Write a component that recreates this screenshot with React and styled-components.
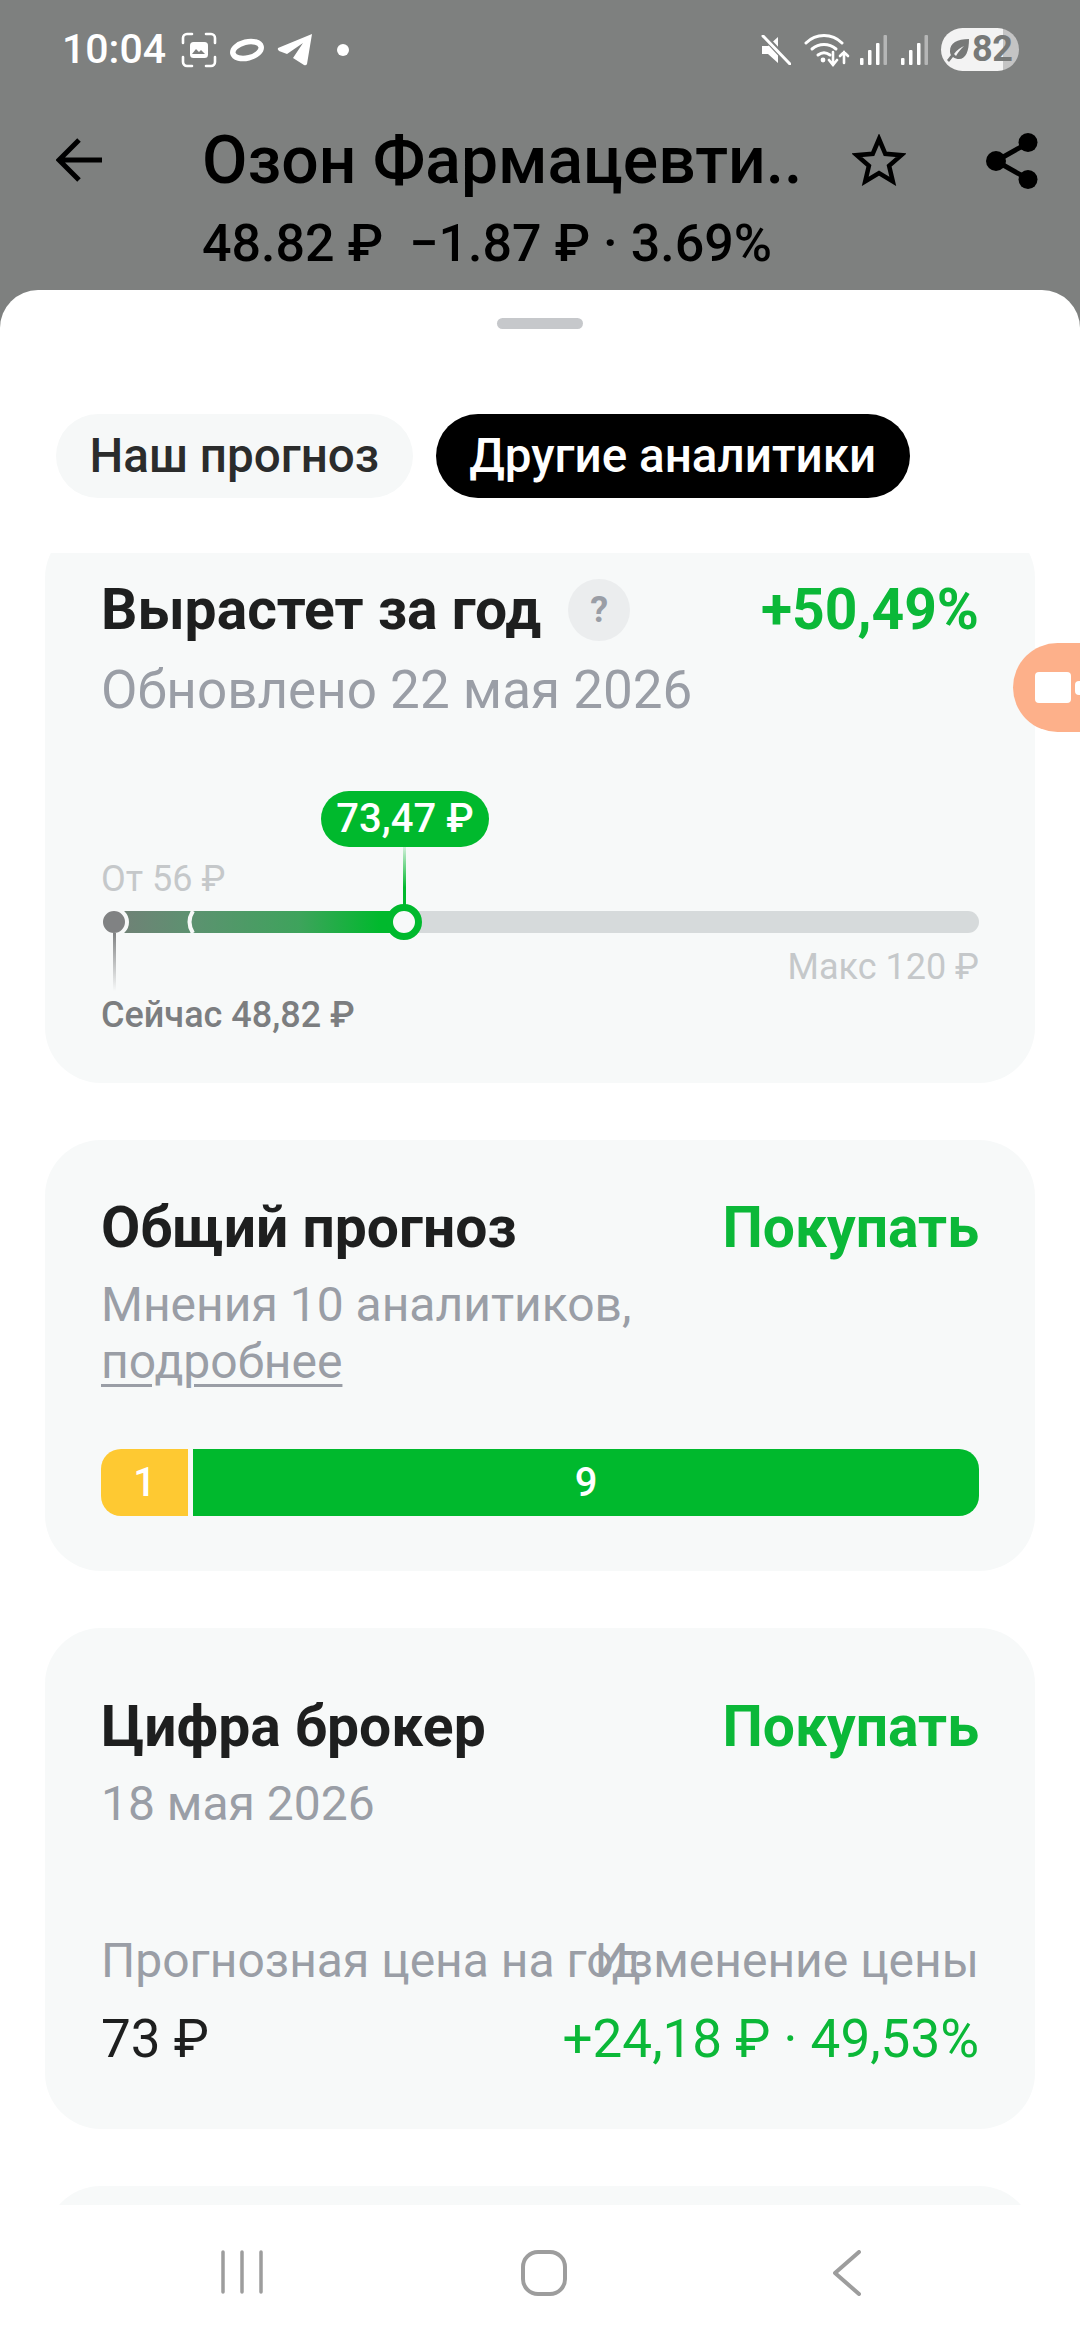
import React from "react";
import styled, { createGlobalStyle } from "styled-components";

const Global = createGlobalStyle`
  html, body { margin: 0; padding: 0; background: #fff; }
  body { font-family: Roboto, "Noto Sans", sans-serif; }
  * { box-sizing: border-box; }
`;

const Screen = styled.div`
  position: relative; width: 1080px; height: 2340px; overflow: hidden;
  display: flex; flex-direction: column; background: #7e807f;
`;
const StatusBar = styled.div`
  height: 98px; padding: 28px 61px 0 62px; display: flex; align-items: flex-start; justify-content: space-between; flex: none;
`;
const StatusGroup = styled.div`display: flex; align-items: center; height: 43px;`;
const Time = styled.span`color: #fff; font: 500 41px/43px Roboto, sans-serif; margin-right: 15px;`;
const Battery = styled.div`
  width: 78px; height: 43px; border-radius: 22px; margin-left: 13px; overflow: hidden; display: flex; align-items: center;
  background: linear-gradient(90deg, #f3f3f3 0 62px, #c4c4c4 62px 100%); padding-left: 4px;
`;
const BatteryText = styled.span`color: #777978; font: 700 36px/43px Roboto, sans-serif; margin-left: 1px; letter-spacing: -0.5px;`;

const Header = styled.div`
  height: 192px; flex: none; display: flex; padding: 28px 42px 0 56px; align-items: flex-start;
`;
const BackSlot = styled.div`width: 146px; flex: none; padding-top: 12px;`;
const HeaderText = styled.div`flex: 1; min-width: 0;`;
const Title = styled.div`font: 500 66px/70px Roboto, sans-serif; color: #000; white-space: nowrap;`;
const Sub = styled.div`font: 500 52px/60px Roboto, sans-serif; color: #000; white-space: pre; margin-top: 18px;`;
const HeaderIcons = styled.div`display: flex; gap: 80px; padding-top: 7px;`;

const Sheet = styled.div`
  flex: 1; min-height: 0; background: #fff; border-radius: 38px 38px 0 0; display: flex; flex-direction: column;
`;
const Handle = styled.div`width: 86px; height: 11px; border-radius: 6px; background: #c6c8cb; margin: 28px auto 0; flex: none;`;
const Tabs = styled.div`display: flex; gap: 23px; padding: 85px 56px 0; flex: none;`;
const Tab = styled.div`
  height: 84px; padding: 0 33.5px; border-radius: 42px; display: flex; align-items: center;
  font: 500 47.6px/84px Roboto, sans-serif;
  background: ${p => (p.$active ? "#000" : "#f6f8f8")};
  color: ${p => (p.$active ? "#fff" : "#2b2c2c")};
`;
const Viewport = styled.div`flex: 1; min-height: 0; overflow: hidden; margin-top: 55px; padding: 0 45px;`;
const Scroller = styled.div`display: flex; flex-direction: column; gap: 57px; margin-top: -31px;`;
const Card = styled.div`
  background: #f7f9f9; border-radius: 56px; padding: ${p => p.$top ?? 59}px 56px ${p => p.$bottom ?? 55}px;
  min-height: ${p => p.$min ?? 0}px;
`;
const CardHead = styled.div`display: flex; justify-content: space-between; align-items: center; height: 57px;`;
const CardTitleWrap = styled.div`display: flex; align-items: center; gap: 27px;`;
const CardTitle = styled.div`font: 700 57px/57px Roboto, sans-serif; color: #1e1f1f; white-space: nowrap;`;
const Verdict = styled.div`font: 700 57px/57px Roboto, sans-serif; color: #0bb838; white-space: nowrap;`;
const Help = styled.div`
  width: 62px; height: 62px; border-radius: 50%; background: #ebedee; color: #9a9ea6;
  font: 700 36px/62px Roboto, sans-serif; text-align: center;
`;
const Muted = styled.div`font: 400 ${p => p.$size ?? 48}px/57px Roboto, sans-serif; color: #9a9ea6; margin-top: ${p => p.$top ?? 20}px;`;
const MutedLink = styled.span`text-decoration: underline; text-underline-offset: 6px; text-decoration-thickness: 3px;`;

const Range = styled.div`position: relative; margin-top: 72px; padding-top: 67px;`;
const RangeLabel = styled.div`
  font: 400 36px/42px Roboto, sans-serif; color: #c5c8ca;
`;
const MaxLabel = styled(RangeLabel)`text-align: right; margin-top: 13px;`;
const NowLabel = styled.div`font: 500 36px/42px Roboto, sans-serif; color: #7c7e80; margin-top: 6px;`;
const Track = styled.div`position: relative; height: 22px; border-radius: 11px; background: #d6dadb; margin-top: 11px; margin-left: 2px;`;
const Fill = styled.div`
  height: 100%; border-radius: 11px 0 0 11px; width: ${p => p.$w}px;
  background: linear-gradient(90deg, #757d78 0%, #5c9270 30%, #3ea35c 65%, #00b92d 92%);
`;
const NowDot = styled.div`
  position: absolute; left: -4px; top: -4px; width: 30px; height: 30px; border-radius: 50%;
  background: #808283; border: 4px solid #f7f9f9;
`;
const NowStem = styled.div`
  position: absolute; left: 10px; top: 22px; width: 3px; height: 58px;
  background: linear-gradient(180deg, #808283, rgba(128,130,131,0));
`;
const FromCut = styled.svg`position: absolute; left: 80px; top: 0; display: block;`;
const Knob = styled.div`
  position: absolute; left: 283px; top: -7px; width: 36px; height: 36px; border-radius: 50%;
  background: #f7f9f9; border: 7px solid #00b92d;
`;
const KnobStem = styled.div`
  position: absolute; left: 302px; top: 56px; width: 3px; height: 58px;
  background: linear-gradient(180deg, rgba(0,185,45,0.15), #00b92d 70%);
`;
const Bubble = styled.div`
  position: absolute; left: 220px; top: 0; width: 168px; height: 56px; border-radius: 28px; background: #00b92d;
  color: #fff; font: 500 40px/56px Roboto, sans-serif; text-align: center;
`;

const VoteBar = styled.div`display: flex; gap: 5px; height: 67px; margin-top: 59px;`;
const Vote = styled.div`
  flex: ${p => (p.$grow ? 1 : "none")}; width: ${p => (p.$grow ? "auto" : "87px")};
  background: ${p => p.$c}; border-radius: ${p => p.$r};
  color: #fff; font: 500 40px/67px Roboto, sans-serif; text-align: center;
`;

const Split = styled.div`display: grid; grid-template-columns: minmax(0, 1fr) minmax(0, 1fr); margin-top: ${p => p.$top}px;`;
const Cell = styled.div`display: flex; white-space: nowrap; justify-content: ${p => (p.$right ? "flex-end" : "flex-start")};`;
const MetricLabel = styled.div`font: 400 48px/57px Roboto, sans-serif; color: #9a9ea6; flex: none;`;
const MetricValue = styled.div`font: 400 53px/60px Roboto, sans-serif; color: ${p => p.$c}; flex: none;`;

const Nav = styled.div`
  height: 135px; flex: none; background: #fff; display: flex; padding-top: 45px; align-items: flex-start;
`;

const W = "#fff";

const ScreenshotIcon = () => (
  <svg width="36" height="36" viewBox="0 0 36 36" style={{ marginRight: 12 }}>
    <path d="M2 11V6a4 4 0 0 1 4-4h5M25 2h5a4 4 0 0 1 4 4v5M34 25v5a4 4 0 0 1-4 4h-5M11 34H6a4 4 0 0 1-4-4v-5" fill="none" stroke={W} strokeWidth="2.6" strokeLinecap="round" />
    <rect x="9" y="10" width="18" height="16" rx="3.5" fill={W} />
    <path d="M11 22l4-5 3 3 2-2 4 4z" fill="#7e807f" />
  </svg>
);
const RingIcon = () => (
  <svg width="36" height="26" viewBox="0 0 36 26" style={{ marginRight: 12 }}>
    <ellipse cx="18" cy="13" rx="14.5" ry="8" transform="rotate(-14 18 13)" fill="none" stroke={W} strokeWidth="5.5" />
  </svg>
);
const PlaneIcon = () => (
  <svg width="36" height="32" viewBox="0 0 36 32" style={{ marginRight: 24 }}>
    <path d="M1 14 L35 0 L30 30 Q29 32 27 31 L16 24 L26 9 L10 20 L2 17 Q0 15 1 14z" fill={W} />
  </svg>
);
const Dot = styled.span`width: 12px; height: 12px; border-radius: 50%; background: #fff;`;
const MuteIcon = () => (
  <svg width="30" height="30" viewBox="0 0 30 30" style={{ marginRight: 13 }}>
    <path d="M1 11h6l10-9v26L7 19H1z" fill={W} />
    <path d="M3 1l26 28" stroke="#7e807f" strokeWidth="6" />
    <path d="M2 1l27 28" stroke={W} strokeWidth="3" strokeLinecap="round" />
  </svg>
);
const WifiIcon = () => (
  <svg width="46" height="34" viewBox="0 0 46 34" style={{ marginRight: 10 }}>
    <g fill="none" stroke={W} strokeWidth="3" strokeLinecap="round">
      <path d="M2 10C12 0 28 0 38 10" />
      <path d="M8 16c7-6 17-6 24 0" />
      <path d="M14 22c4-3 8-3 12 0" />
      <path d="M29 19v13M25 27l4 5 4-5" strokeWidth="2.6" />
      <path d="M40 30V19M36 23l4-4 4 4" strokeWidth="2.6" />
    </g>
    <circle cx="19" cy="27" r="2.4" fill={W} />
  </svg>
);
const SignalIcon = ({ mr }) => (
  <svg width="27" height="30" viewBox="0 0 27 30" style={{ marginRight: mr }}>
    <rect x="0" y="23" width="3.5" height="7" rx="1" fill={W} />
    <rect x="8" y="15" width="3.5" height="15" rx="1" fill={W} />
    <rect x="16" y="8" width="3.5" height="22" rx="1" fill={W} />
    <rect x="23.5" y="0" width="3.5" height="30" rx="1" fill="#b5b6b6" />
  </svg>
);
const LeafIcon = () => (
  <svg width="26" height="26" viewBox="0 0 26 26">
    <path d="M24 2C12 2 5 6 5 14c0 1.500.3 3 1 4L2 23l2 2 4-5c2 1.500 4 2 6 2 7 0 10-8 10-20zM9 17c3-4 6-6 10-8-3 3-6 6-8 10z" fill="#777978" fillRule="evenodd" />
  </svg>
);
const BackIcon = () => (
  <svg width="46" height="44" viewBox="0 0 46 44" style={{ display: "block" }}>
    <path d="M46 22H4M23 2L3 22l20 20" fill="none" stroke="#000" strokeWidth="5" />
  </svg>
);
const StarIcon = () => (
  <svg width="54" height="52" viewBox="0 0 54 52" style={{ display: "block", marginTop: 1 }}>
    <path d="M27 5l6.300 14.800 16 1.400-12.200 10.500 3.700 15.700L27 39.100 13.200 47.400l3.700-15.700L4.700 21.200l16-1.400z" fill="none" stroke="#000" strokeWidth="4.500" />
  </svg>
);
const ShareIcon = () => (
  <svg width="52" height="56" viewBox="0 0 52 56" style={{ display: "block" }}>
    <path d="M42 10L10 28l32 18" fill="none" stroke="#000" strokeWidth="5" />
    <circle cx="42" cy="9.500" r="9.500" fill="#000" /><circle cx="10" cy="28" r="10" fill="#000" /><circle cx="42" cy="46.500" r="9.500" fill="#000" />
  </svg>
);
const NavStroke = "#9d9d9d";
const Recents = () => (
  <svg width="42" height="44" viewBox="0 0 42 44"><path d="M2 2v40M21 2v40M40 2v40" stroke={NavStroke} strokeWidth="3.5" strokeLinecap="round" /></svg>
);
const Home = () => (
  <svg width="46" height="46" viewBox="0 0 46 46"><rect x="2" y="2" width="42" height="42" rx="15" fill="none" stroke={NavStroke} strokeWidth="4" /></svg>
);
const BackNav = () => (
  <svg width="28" height="46" viewBox="0 0 28 46"><path d="M26 2L2 23l24 21" fill="none" stroke={NavStroke} strokeWidth="4" strokeLinecap="round" strokeLinejoin="round" /></svg>
);

const RecBubble = styled.div`
  position: absolute; right: -40px; top: 643px; width: 107px; height: 89px; border-radius: 45px 0 0 45px; background: #fdb08a;
  display: flex; align-items: center; padding-left: 22px; gap: 4px;
`;
const RecBody = styled.div`width: 36px; height: 31px; border-radius: 4px; background: #fff; flex: none;`;
const RecLens = styled.div`width: 14px; height: 14px; border-radius: 4px; background: #fff; flex: none;`;

const NavRow = styled.div`display: flex; width: 100%; padding-left: 221px;`;
const NavCell = styled.div`margin-left: ${p => p.$ml}px; display: flex;`;

export default function App() {
  return (
    <Screen>
      <Global />
      <StatusBar>
        <StatusGroup>
          <Time>10:04</Time>
          <ScreenshotIcon />
          <RingIcon />
          <PlaneIcon />
          <Dot />
        </StatusGroup>
        <StatusGroup>
          <MuteIcon />
          <WifiIcon />
          <SignalIcon mr={14} />
          <SignalIcon mr={0} />
          <Battery>
            <LeafIcon />
            <BatteryText>82</BatteryText>
          </Battery>
        </StatusGroup>
      </StatusBar>
      <Header>
        <BackSlot><BackIcon /></BackSlot>
        <HeaderText>
          <Title>Озон Фармацевти..</Title>
          <Sub>48.82 ₽  −1.87 ₽ · 3.69%</Sub>
        </HeaderText>
        <HeaderIcons>
          <StarIcon />
          <ShareIcon />
        </HeaderIcons>
      </Header>
      <Sheet>
        <Handle />
        <Tabs>
          <Tab>Наш прогноз</Tab>
          <Tab $active>Другие аналитики</Tab>
        </Tabs>
        <Viewport>
          <Scroller>
            <Card $bottom={47}>
              <CardHead>
                <CardTitleWrap>
                  <CardTitle>Вырастет за год</CardTitle>
                  <Help>?</Help>
                </CardTitleWrap>
                <Verdict>+50,49%</Verdict>
              </CardHead>
              <Muted $top={24} $size={53}>Обновлено 22 мая 2026</Muted>
              <Range>
                <Bubble>73,47 ₽</Bubble>
                <KnobStem />
                <RangeLabel>От 56 ₽</RangeLabel>
                <Track>
                  <Fill $w={301} />
                  <FromCut width="12" height="22" viewBox="0 0 12 22">
                    <path d="M10 0Q3 11 10 22" fill="none" stroke="#f7f9f9" strokeWidth="4" />
                  </FromCut>
                  <NowDot />
                  <NowStem />
                  <Knob />
                </Track>
                <MaxLabel>Макс 120 ₽</MaxLabel>
                <NowLabel>Сейчас 48,82 ₽</NowLabel>
              </Range>
            </Card>
            <Card>
              <CardHead>
                <CardTitle>Общий прогноз</CardTitle>
                <Verdict>Покупать</Verdict>
              </CardHead>
              <Muted>Мнения 10 аналитиков,<br /><MutedLink>подробнее</MutedLink></Muted>
              <VoteBar>
                <Vote $c="#fec932" $r="20px 0 0 20px">1</Vote>
                <Vote $grow $c="#00b92d" $r="0 20px 20px 0">9</Vote>
              </VoteBar>
            </Card>
            <Card $top={70} $bottom={60}>
              <CardHead>
                <CardTitle>Цифра брокер</CardTitle>
                <Verdict>Покупать</Verdict>
              </CardHead>
              <Muted>18 мая 2026</Muted>
              <Split $top={100}>
                <Cell><MetricLabel>Прогнозная цена на год</MetricLabel></Cell>
                <Cell $right><MetricLabel>Изменение цены</MetricLabel></Cell>
              </Split>
              <Split $top={20}>
                <Cell><MetricValue $c="#1e1f1f">73 ₽</MetricValue></Cell>
                <Cell $right><MetricValue $c="#0bb838">+24,18 ₽ · 49,53%</MetricValue></Cell>
              </Split>
            </Card>
            <Card $min={300} />
          </Scroller>
        </Viewport>
        <Nav>
          <NavRow>
            <NavCell $ml={0}><Recents /></NavCell>
            <NavCell $ml={258}><Home /></NavCell>
            <NavCell $ml={266}><BackNav /></NavCell>
          </NavRow>
        </Nav>
      </Sheet>
      <RecBubble>
        <RecBody />
        <RecLens />
      </RecBubble>
    </Screen>
  );
}
